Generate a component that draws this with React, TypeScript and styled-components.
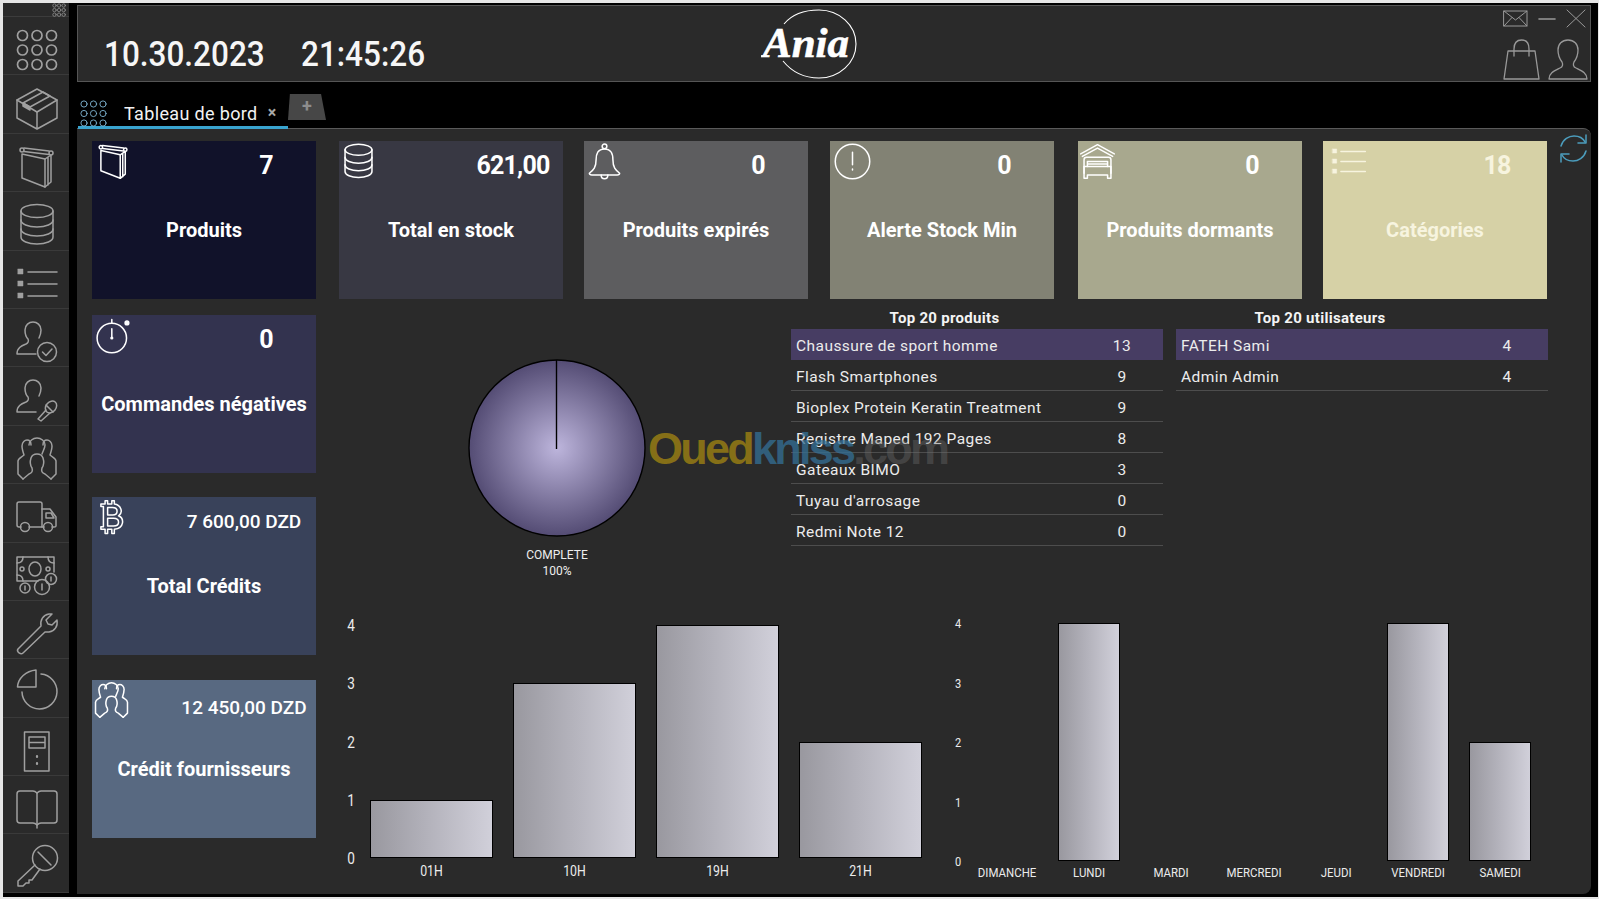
import React from 'react';
import styled, { createGlobalStyle } from 'styled-components';

const UI_FONT = `"Roboto", "Liberation Sans", sans-serif`;

const GlobalStyle = createGlobalStyle`
  html, body { margin: 0; padding: 0; background: #000; }
  body { font-family: ${UI_FONT}; color: #fff; overflow: hidden; }
`;

const Frame = styled.div`
  box-sizing: border-box;
  width: 1599px;
  height: 899px;
  display: flex;
  background: #000;
  border-style: solid;
  border-color: #e6e6e6;
  border-width: 3px 1px 2px 3px;
`;

const Sidebar = styled.nav`
  width: 66px;
  height: 890px;
  flex: none;
  display: flex;
  flex-direction: column;
  background: #2a2a2a;
  color: #a0a0a0;
`;

const SidebarTop = styled.div`
  height: 14px;
  flex: none;
  display: flex;
  justify-content: flex-end;
  padding-right: 3px;
  border-bottom: 1px solid #3c3c3c;
  box-sizing: border-box;
  color: #8f8f8f;
`;

const SidebarItem = styled.div<{ $inset?: number }>`
  flex: 0 0 58.4px;
  box-sizing: border-box;
  padding: ${(p) => p.$inset ?? 11}px 0 0 12px;
  border-bottom: 1px solid #3a3a3a;
`;

const Main = styled.div`
  margin-left: 8px;
  width: 1514px;
  display: flex;
  flex-direction: column;
  padding-top: 2px;
`;

const Header = styled.header`
  height: 77px;
  box-sizing: border-box;
  flex: none;
  display: grid;
  grid-template-columns: 683px 100px 1fr;
  background: #2a2a2a;
  border: 1px solid #555;
`;

const DateTime = styled.div`
  display: flex;
  gap: 18px;
  padding: 28px 0 0 26px;
  font-size: 35px;
  line-height: 42px;
  font-weight: 500;
  color: #f6f6f6;
`;

const ClockPart = styled.span`
  display: block;
  transform: scaleX(0.9);
  transform-origin: left center;
`;

const LogoScript = styled.text`
  font-family: "Liberation Serif", serif;
  font-style: italic;
  font-weight: 700;
  font-size: 43px;
  fill: #fff;
  stroke: #fff;
  stroke-width: 0.6px;
`;

const WindowTools = styled.div`
  display: flex;
  flex-direction: column;
  align-items: flex-end;
  padding: 3px 4px 0 0;
  color: #999;
`;

const ToolRow = styled.div`
  display: flex;
  align-items: center;
  gap: 10px;
`;

const AccountRow = styled.div`
  display: flex;
  align-items: flex-end;
  gap: 8px;
  margin-top: 11px;
  margin-right: -2px;
`;

const TabStrip = styled.div`
  height: 46px;
  flex: none;
  display: flex;
  align-items: flex-end;
`;

const ActiveTab = styled.div`
  position: relative;
  z-index: 2;
  box-sizing: border-box;
  width: 210px;
  height: 29px;
  margin: 0 0 -1px 1px;
  padding: 0 0 0 2px;
  display: flex;
  align-items: flex-start;
  border-bottom: 3px solid #39a4cf;
  color: #7fb6d4;
`;

const TabTitle = styled.span`
  margin: 4px 0 0 17px;
  font-size: 18px;
  line-height: 20px;
  letter-spacing: 0.35px;
  color: #f2f2f2;
`;

const TabClose = styled.span`
  margin: 3px 0 0 10px;
  font-size: 16px;
  line-height: 20px;
  font-weight: 700;
  color: #a8a8a8;
`;

const AddTab = styled.div`
  width: 38px;
  height: 26px;
  margin: 0 0 8px 0;
  display: flex;
  align-items: center;
  justify-content: center;
  padding-bottom: 3px;
  box-sizing: border-box;
  background: #474747;
  clip-path: polygon(5% 0, 87% 0, 100% 100%, 0 100%);
  font-size: 18px;
  font-weight: 700;
  color: #8d8d8d;
`;

const Content = styled.main`
  position: relative;
  height: 766px;
  box-sizing: border-box;
  padding: 12px 0 0 15px;
  background: #2a2a2a;
  border-top: 1px solid #5a5a5a;
  border-radius: 0 8px 8px 0;
`;

const RefreshSlot = styled.div`
  position: absolute;
  top: 5px;
  right: 3px;
  color: #4c9dbd;
`;

const CardRow = styled.div`
  display: flex;
`;

const Card = styled.section<{ $bg: string; $ink?: string; $shift?: number; $gapAbove?: number }>`
  box-sizing: border-box;
  flex: none;
  width: 224px;
  height: 158px;
  margin-left: ${(p) => p.$shift ?? 0}px;
  margin-top: ${(p) => p.$gapAbove ?? 0}px;
  background: ${(p) => p.$bg};
  color: ${(p) => p.$ink ?? '#fff'};
`;

const CardTop = styled.div`
  height: 48px;
  display: flex;
  align-items: center;
  justify-content: space-between;
`;

const CardGlyph = styled.div<{ $x: number }>`
  margin-left: ${(p) => p.$x}px;
  margin-top: -8px;
  display: flex;
`;

const CardValue = styled.div<{ $wide?: boolean; $drop?: number }>`
  width: ${(p) => (p.$wide ? 144 : 100)}px;
  margin-top: ${(p) => p.$drop ?? 0}px;
  text-align: center;
  white-space: nowrap;
  font-weight: ${(p) => (p.$wide ? 500 : 700)};
  font-size: ${(p) => (p.$wide ? 19 : 25)}px;
  letter-spacing: ${(p) => (p.$wide ? 0 : -0.8)}px;
`;

const CardLabel = styled.div`
  margin-top: 29px;
  text-align: center;
  white-space: nowrap;
  font-size: 20px;
  line-height: 24px;
  font-weight: 700;
  letter-spacing: 0;
`;

const Lower = styled.div`
  display: flex;
`;

const LeftCards = styled.div`
  width: 224px;
  flex: none;
  padding-top: 16px;
`;

const Analysis = styled.div`
  margin-left: 23px;
  padding-top: 10px;
`;

const Middle = styled.div`
  height: 314px;
  display: flex;
  gap: 13px;
`;

const PieBlock = styled.div`
  width: 452px;
  margin-right: -13px;
  box-sizing: border-box;
  padding: 50px 0 0 129px;
  display: flex;
  flex-direction: column;
`;

const PieSvg = styled.svg`
  width: 178px;
  height: 178px;
  flex: none;
`;

const PieCaption = styled.div`
  width: 178px;
  margin-top: 10px;
  text-align: center;
  font-size: 12px;
  line-height: 16px;
  color: #eee;
`;

const TopTable = styled.div`
  width: 372px;
  flex: none;
`;

const TableTitle = styled.div<{ $inset: number }>`
  height: 20px;
  padding-right: ${(p) => p.$inset}px;
  font-size: 15px;
  line-height: 18px;
  font-weight: 700;
  letter-spacing: 0.3px;
  color: #f4f4f4;
  text-align: center;
`;

const TableRow = styled.div<{ $on?: boolean }>`
  box-sizing: border-box;
  height: 31px;
  display: flex;
  align-items: center;
  padding: 3px 0 0 5px;
  background: ${(p) => (p.$on ? '#473d63' : 'transparent')};
  border-bottom: 1px solid ${(p) => (p.$on ? '#473d63' : '#4d4d4d')};
  font-size: 15.5px;
  letter-spacing: 0.45px;
  color: #ececec;
`;

const RowName = styled.span`
  flex: 1;
  white-space: nowrap;
`;

const RowCount = styled.span`
  width: 70px;
  margin-right: 6px;
  text-align: center;
`;

const Charts = styled.div`
  display: flex;
  align-items: flex-start;
`;

const Chart = styled.div<{ $top: number; $left: number }>`
  display: flex;
  margin-top: ${(p) => p.$top}px;
  margin-left: ${(p) => p.$left}px;
`;

const Axis = styled.div<{ $height: number; $width: number; $pull: number; $size: number }>`
  width: ${(p) => p.$width}px;
  height: ${(p) => p.$height}px;
  margin-right: ${(p) => p.$pull}px;
  display: flex;
  flex-direction: column-reverse;
  justify-content: space-between;
  text-align: center;
  font-size: ${(p) => p.$size}px;
  color: #ececec;
`;

const AxisTick = styled.span`
  display: block;
  height: 0;
  line-height: 0;
  transform: translateY(1px) scaleX(0.85);
`;

const Plot = styled.div`
  display: flex;
  flex-direction: column;
`;

const Slots = styled.div<{ $height: number }>`
  height: ${(p) => p.$height}px;
  display: flex;
  align-items: flex-end;
`;

const Slot = styled.div<{ $width: number }>`
  width: ${(p) => p.$width}px;
  box-sizing: border-box;
  padding: 0 10px;
`;

const Bar = styled.div`
  box-sizing: border-box;
  border: 1px solid #000;
  background: linear-gradient(90deg, #99989f 0%, #b2b1ba 45%, #d1d0da 100%);
`;

const SlotLabels = styled.div`
  display: flex;
`;

const SlotLabel = styled.div<{ $width: number; $size: number; $gap: number; $squeeze: number }>`
  width: ${(p) => p.$width}px;
  margin-top: ${(p) => p.$gap}px;
  text-align: center;
  white-space: nowrap;
  font-size: ${(p) => p.$size}px;
  line-height: 16px;
  color: #ececec;
  transform: scaleX(${(p) => p.$squeeze});
`;

const Watermark = styled.div`
  position: absolute;
  left: 571px;
  top: 295px;
  z-index: 3;
  font-family: "Liberation Sans", sans-serif;
  font-size: 45px;
  line-height: 50px;
  font-weight: 700;
  letter-spacing: -2.75px;
  white-space: nowrap;
  pointer-events: none;
`;

const WatermarkPart = styled.span<{ $ink: string }>`
  color: ${(p) => p.$ink};
`;

const Glyph = styled.svg`
  display: block;
  flex: none;
  overflow: visible;
  fill: none;
  stroke: currentColor;
  stroke-linecap: round;
  stroke-linejoin: round;
`;

const PERSON = 'M21 34H2c0-6 4-8 9-10 2-1 3-3 2-5-2-2-3-6-3-9 0-5 4-8 8-8s8 3 8 8c0 3-1 6-2 8';

// Line drawings shared by the sidebar, the cards and the window tools.
const DRAWINGS: Record<string, React.ReactNode> = {
  box: (
    <>
      <path d="M22 2 42 13 22 25 2 13Z" />
      <path d="M2 13V31L22 42 42 31V13M22 25V42" />
      <path d="M8 16 28 5 35 9 15 20Z" />
      <path d="M8 16 15 20V23L8 19Z" fill="currentColor" />
    </>
  ),
  book: (
    <>
      <path d="M7 9 30 14V42L7 33Z" />
      <path d="M30 14 36 10V37L30 42M33 12V40" />
      <path d="M9 3 34 6M9 6.5 34 9.5" />
      <circle cx="7" cy="5" r="2" />
      <circle cx="36" cy="8" r="2" />
    </>
  ),
  db: (
    <>
      <ellipse cx="22" cy="8" rx="16" ry="6.5" />
      <path d="M6 8V34C6 38 13 41 22 41S38 38 38 34V8" />
      <path d="M6 17C6 21 13 24 22 24S38 21 38 17" />
      <path d="M6 26C6 30 13 33 22 33S38 30 38 26" />
    </>
  ),
  list: (
    <>
      <path d="M3 7H8V12H3ZM3 19H8V24H3ZM3 31H8V36H3Z" fill="currentColor" strokeWidth={0.5} />
      <path d="M13 10H42M13 22H42M13 34H42" />
    </>
  ),
  userCheck: (
    <>
      <path d={PERSON} />
      <circle cx="32" cy="32" r="9.5" />
      <path d="M27.5 32 31 35.5 37 29" />
    </>
  ),
  userMic: (
    <>
      <path d={PERSON} />
      <ellipse cx="36" cy="29" rx="5" ry="6.5" transform="rotate(40 36 29)" />
      <path d="M31 27 38 34M31 32 23 41 26 43 35 35" />
    </>
  ),
  group: (
    <>
      <path d="M8 42 14 37C17 36 18 34 17 31 15 28 15 24 16 21 17 18 20 17 22 17S27 18 28 21 29 28 27 31C26 34 27 36 30 37L36 42" />
      <path d="M8 42 3 37V24C3 21 7 20 9 18 8 15 7 12 7 9 7 5 10 3 12 3 15 3 16 5 16 8" />
      <path d="M14 8C14 4 18 1 22 1S30 4 30 8C30 11 28 14 27 17" />
      <path d="M36 42 41 37V24C41 21 37 20 35 18 36 15 37 12 37 9 37 5 34 3 32 3 29 3 28 5 28 8" />
    </>
  ),
  truck: (
    <>
      <path d="M6 32H4C3 32 2 31 2 30V9C2 8 3 7 4 7H25C26 7 27 8 27 9V32H14" />
      <path d="M27 14H35L41 22V31C41 32 40 32 39 32H37M29 32H27M31 18H36L39 23H31Z" />
      <circle cx="10" cy="32" r="4.5" />
      <circle cx="33" cy="32" r="4.5" />
    </>
  ),
  money: (
    <>
      <path d="M23 28H2V4H39V19" />
      <path d="M2 10C6 10 8 8 8 4M33 4C33 8 35 10 39 10M2 22C6 22 8 24 8 28" />
      <ellipse cx="20" cy="16" rx="6" ry="7" />
      <circle cx="7" cy="16" r="2" />
      <circle cx="33" cy="16" r="2" />
      <circle cx="10" cy="35" r="5" />
      <path d="M10 33V37" />
      <circle cx="27" cy="34" r="7.5" />
      <path d="M27 31V37" />
      <circle cx="36" cy="26" r="5.5" />
      <path d="M36 24V28" />
    </>
  ),
  wrench: (
    <path d="M3 38 26 15C25 9 28 4 34 3H37L31 9 33 13 37 14 42 9C43 15 40 20 34 21 32 21 31 21 30 21L8 42C6 44 1 41 3 38Z" />
  ),
  pie: (
    <>
      <path d="M21 3V20H2.5C3 11 11 4 21 3Z" />
      <path d="M26 7A17.5 17.5 0 1 1 7 25" />
    </>
  ),
  server: (
    <>
      <path d="M9.5 3H34V42H9.5Z" />
      <path d="M14 8H30V19H14ZM14 13.5H30" />
      <path d="M22 27V28M22 34V35" strokeWidth={2.2} />
    </>
  ),
  openBook: (
    <>
      <path d="M22 7C21 6 20 5 18 5H5C3 5 2 6 2 8V34C2 36 3 37 5 37H18C20 37 21 38 22 39 23 38 24 37 26 37H39C41 37 42 36 42 34V8C42 6 41 5 39 5H26C24 5 23 6 22 7Z" />
      <path d="M22 7V42" />
    </>
  ),
  key: (
    <>
      <circle cx="30" cy="15" r="12.5" />
      <path d="M23 9 36 22" />
      <path d="M20 22 3 38V43H8L11 40H14V37H17L25 26" />
    </>
  ),
  bell: (
    <>
      <path d="M22 7C14 7 12 13 12 20 12 29 9 32 4 36 4 37 5 38 7 38H37C39 38 40 37 40 36 35 32 32 29 32 20 32 13 30 7 22 7Z" />
      <circle cx="22" cy="4" r="2.8" />
      <path d="M18 38C18 44 26 44 26 38" />
    </>
  ),
  alert: (
    <>
      <circle cx="22" cy="22" r="20.5" />
      <path d="M22 11V26M22 31V32" strokeWidth={1.8} />
    </>
  ),
  bedHouse: (
    <>
      <path d="M2 13 22 2 42 13M4 16 22 6 40 16" />
      <path d="M6 36V20C6 18 7 17 9 17H35C37 17 38 18 38 20V36" />
      <path d="M6 28H38V36M6 28V42H10V38H34V42H38V36" />
      <path d="M10 28V22H34V28M10 25H34" />
    </>
  ),
  timer: (
    <>
      <circle cx="20" cy="25" r="17.5" />
      <path d="M20 3V7M20 14V25" />
      <circle cx="20" cy="25" r="1" fill="currentColor" />
      <circle cx="38" cy="7" r="2.2" fill="currentColor" />
    </>
  ),
  bitcoin: (
    <>
      <path d="M7 6H12V2H15V6H20V2H23V6C31 7 34 16 28 20 35 23 35 35 23 36V41H20V36H15V41H12V36H7V33H10V9H7Z" />
      <path d="M15 10H21C28 10 28 19 21 19H15ZM15 23H22C30 23 30 32 22 32H15Z" />
    </>
  ),
  mail: (
    <>
      <path d="M1 2H24V17H1Z" />
      <path d="M1 2 12.5 11 24 2M1 17 9 8.5M24 17 16 8.5" />
    </>
  ),
  minus: <path d="M1 1H17" strokeWidth={1.6} />,
  close: <path d="M1 1 19 18M19 1 1 18" />,
  bag: (
    <>
      <path d="M5 12H32L36 40H1Z" />
      <path d="M11 17V10C11 4 14 1 18.5 1S26 4 26 10V17" />
    </>
  ),
  person: (
    <path d="M1 40C1 34 6 32 12 29 15 28 15 25 14 23 11 19 10 15 10 11 10 5 14 1 20 1S30 5 30 11C30 15 29 19 26 23 25 25 25 28 28 29 34 32 39 34 39 40Z" />
  ),
  refresh: (
    <>
      <path d="M2 12C4 5 10 2 15 2 20 2 24 4 26 8" />
      <path d="M27 1V9H19" />
      <path d="M27 17C25 24 19 27 14 27 9 27 5 25 3 21" />
      <path d="M2 28V20H10" />
    </>
  ),
};

type IconProps = { name: string; box: [number, number]; size?: [number, number]; weight?: number };

const Icon = ({ name, box, size, weight = 1.5 }: IconProps) => (
  <Glyph
    viewBox={`0 0 ${box[0]} ${box[1]}`}
    width={(size ?? box)[0]}
    height={(size ?? box)[1]}
    strokeWidth={weight}
  >
    {DRAWINGS[name]}
  </Glyph>
);

const DotGrid = ({ pitch, radius, weight }: { pitch: number; radius: number; weight: number }) => {
  const edge = pitch * 2 + (radius + weight) * 2;
  const start = radius + weight;
  return (
    <Glyph viewBox={`0 0 ${edge} ${edge}`} width={edge} height={edge} strokeWidth={weight}>
      {[0, 1, 2].flatMap((row) =>
        [0, 1, 2].map((col) => (
          <circle key={`${row}-${col}`} cx={start + col * pitch} cy={start + row * pitch} r={radius} />
        )),
      )}
    </Glyph>
  );
};

const NAV_ICONS: [string, number][] = [
  ['box', 12], ['book', 11], ['db', 11], ['list', 11], ['userCheck', 11], ['userMic', 11],
  ['group', 11], ['truck', 11], ['money', 10], ['wrench', 10], ['pie', 8], ['server', 11],
  ['openBook', 10], ['key', 9],
];

const TOP_CARDS = [
  { title: 'Produits', value: '7', bg: '#11122a', icon: 'book', x: 3, shift: 0 },
  { title: 'Total en stock', value: '621,00', bg: '#383843', icon: 'db', x: 1, shift: 23 },
  { title: 'Produits expirés', value: '0', bg: '#5d5d5f', icon: 'bell', x: 2, shift: 21 },
  { title: 'Alerte Stock Min', value: '0', bg: '#828274', icon: 'alert', x: 4, shift: 22 },
  { title: 'Produits dormants', value: '0', bg: '#a8a88e', icon: 'bedHouse', x: 1, shift: 24 },
  { title: 'Catégories', value: '18', bg: '#d6d1a6', icon: 'list', x: 7, shift: 21, ink: '#f7f4df' },
];

const SIDE_CARDS = [
  { title: 'Commandes négatives', value: '0', bg: '#33334f', icon: 'timer', gap: 0, x: 3, wide: false, drop: 0 },
  { title: 'Total Crédits', value: '7 600,00 DZD', bg: '#39425a', icon: 'bitcoin', gap: 24, x: 3, wide: true, drop: 0 },
  { title: 'Crédit fournisseurs', value: '12 450,00 DZD', bg: '#586981', icon: 'group', gap: 25, x: 1, wide: true, drop: 6 },
];

const BEST_PRODUCTS: [string, number][] = [
  ['Chaussure de sport homme', 13],
  ['Flash Smartphones', 9],
  ['Bioplex Protein Keratin Treatment', 9],
  ['Registre Maped 192 Pages', 8],
  ['Gateaux BIMO', 3],
  ["Tuyau d'arrosage", 0],
  ['Redmi Note 12', 0],
];

const BEST_USERS: [string, number][] = [
  ['FATEH Sami', 4],
  ['Admin Admin', 4],
];

const BY_HOUR: [string, number][] = [['01H', 1], ['10H', 3], ['19H', 4], ['21H', 2]];

const BY_DAY: [string, number][] = [
  ['DIMANCHE', 0], ['LUNDI', 4], ['MARDI', 0], ['MERCREDI', 0],
  ['JEUDI', 0], ['VENDREDI', 4], ['SAMEDI', 2],
];

type BarChartProps = {
  data: [string, number][];
  unit: number;
  slot: number;
  axisSize: number;
  axisWidth: number;
  axisPull: number;
  labelSize: number;
  labelGap: number;
  squeeze: number;
  top: number;
  left: number;
};

const BarChart = ({
  data, unit, slot, axisSize, axisWidth, axisPull, labelSize, labelGap, squeeze, top, left,
}: BarChartProps) => (
  <Chart $top={top} $left={left}>
    <Axis $height={unit * 4} $width={axisWidth} $pull={axisPull} $size={axisSize}>
      {[0, 1, 2, 3, 4].map((tick) => (
        <AxisTick key={tick}>{tick}</AxisTick>
      ))}
    </Axis>
    <Plot>
      <Slots $height={unit * 4}>
        {data.map(([label, amount]) => (
          <Slot key={label} $width={slot}>
            {amount > 0 && <Bar style={{ height: amount * unit }} />}
          </Slot>
        ))}
      </Slots>
      <SlotLabels>
        {data.map(([label]) => (
          <SlotLabel key={label} $width={slot} $size={labelSize} $gap={labelGap} $squeeze={squeeze}>
            {label}
          </SlotLabel>
        ))}
      </SlotLabels>
    </Plot>
  </Chart>
);

const RankTable = ({ title, rows, inset }: { title: string; rows: [string, number][]; inset: number }) => (
  <TopTable>
    <TableTitle $inset={inset}>{title}</TableTitle>
    {rows.map(([name, count], index) => (
      <TableRow key={name} $on={index === 0}>
        <RowName>{name}</RowName>
        <RowCount>{count}</RowCount>
      </TableRow>
    ))}
  </TopTable>
);

export default function App() {
  return (
    <>
      <GlobalStyle />
      <Frame>
        <Sidebar>
          <SidebarTop>
            <DotGrid pitch={4.6} radius={1.7} weight={0.8} />
          </SidebarTop>
          <SidebarItem>
            <Glyph viewBox="0 0 44 44" width={44} height={44} strokeWidth={1.7}>
              {[7.5, 22, 36.5].flatMap((cy) =>
                [7.5, 22, 36.5].map((cx) => <circle key={`${cx}-${cy}`} cx={cx} cy={cy} r={5} />),
              )}
            </Glyph>
          </SidebarItem>
          {NAV_ICONS.map(([name, inset]) => (
            <SidebarItem key={name} $inset={inset}>
              <Icon name={name} box={[44, 44]} />
            </SidebarItem>
          ))}
        </Sidebar>

        <Main>
          <Header>
            <DateTime>
              <ClockPart>10.30.2023</ClockPart>
              <ClockPart>21:45:26</ClockPart>
            </DateTime>
            <svg viewBox="760 5 100 76" width={100} height={76}>
              <path
                d="M783 23C792 12 805 9 818 9 838 9 855 24 855 43S838 77 818 77C803 77 791 71 782 60"
                fill="none"
                stroke="#fff"
                strokeWidth={1.1}
              />
              <LogoScript x={762} y={56}>
                Ania
              </LogoScript>
            </svg>
            <WindowTools>
              <ToolRow>
                <Icon name="mail" box={[25, 19]} weight={1} />
                <Icon name="minus" box={[18, 2]} />
                <Icon name="close" box={[20, 19]} weight={1} />
              </ToolRow>
              <AccountRow>
                <Icon name="bag" box={[37, 41]} weight={1.3} />
                <Icon name="person" box={[40, 41]} weight={1.3} />
              </AccountRow>
            </WindowTools>
          </Header>

          <TabStrip>
            <ActiveTab>
              <DotGrid pitch={9.5} radius={3.1} weight={0.9} />
              <TabTitle>Tableau de bord</TabTitle>
              <TabClose>×</TabClose>
            </ActiveTab>
            <AddTab>+</AddTab>
          </TabStrip>

          <Content>
            <RefreshSlot>
              <Icon name="refresh" box={[29, 29]} weight={1.5} />
            </RefreshSlot>

            <CardRow>
              {TOP_CARDS.map((card) => (
                <Card key={card.title} $bg={card.bg} $ink={card.ink} $shift={card.shift}>
                  <CardTop>
                    <CardGlyph $x={card.x}>
                      <Icon name={card.icon} box={[44, 44]} size={[37, 37]} weight={1.8} />
                    </CardGlyph>
                    <CardValue>{card.value}</CardValue>
                  </CardTop>
                  <CardLabel>{card.title}</CardLabel>
                </Card>
              ))}
            </CardRow>

            <Lower>
              <LeftCards>
                {SIDE_CARDS.map((card) => (
                  <Card key={card.title} $bg={card.bg} $gapAbove={card.gap}>
                    <CardTop>
                      <CardGlyph $x={card.x}>
                        <Icon name={card.icon} box={[44, 44]} size={[37, 37]} weight={1.8} />
                      </CardGlyph>
                      <CardValue $wide={card.wide} $drop={card.drop}>{card.value}</CardValue>
                    </CardTop>
                    <CardLabel>{card.title}</CardLabel>
                  </Card>
                ))}
              </LeftCards>

              <Analysis>
                <Middle>
                  <PieBlock>
                    <PieSvg viewBox="0 0 178 178">
                      <defs>
                        <radialGradient id="pieFill">
                          <stop offset="0%" stopColor="#bdb5dc" />
                          <stop offset="100%" stopColor="#544c74" />
                        </radialGradient>
                      </defs>
                      <circle cx="89" cy="89" r="88" fill="url(#pieFill)" stroke="#000" strokeWidth={1.4} />
                      <path d="M88.5 1V90" stroke="#000" strokeWidth={1.4} />
                    </PieSvg>
                    <PieCaption>
                      COMPLETE
                      <br />
                      100%
                    </PieCaption>
                  </PieBlock>
                  <RankTable title="Top 20 produits" rows={BEST_PRODUCTS} inset={65} />
                  <RankTable title="Top 20 utilisateurs" rows={BEST_USERS} inset={84} />
                </Middle>

                <Charts>
                  <BarChart
                    data={BY_HOUR}
                    unit={58.25}
                    slot={143}
                    axisSize={16}
                    axisWidth={24}
                    axisPull={-3}
                    labelSize={15}
                    labelGap={5}
                    squeeze={0.82}
                    top={2}
                    left={0}
                  />
                  <BarChart
                    data={BY_DAY}
                    unit={59.5}
                    slot={82.2}
                    axisSize={13}
                    axisWidth={16}
                    axisPull={0}
                    labelSize={13}
                    labelGap={4}
                    squeeze={0.88}
                    top={0}
                    left={18}
                  />
                </Charts>
              </Analysis>
            </Lower>

            <Watermark>
              <WatermarkPart $ink="rgba(150, 124, 20, 0.85)">Oued</WatermarkPart>
              <WatermarkPart $ink="rgba(52, 112, 150, 0.75)">kniss</WatermarkPart>
              <WatermarkPart $ink="rgba(110, 110, 110, 0.4)">.com</WatermarkPart>
            </Watermark>
          </Content>
        </Main>
      </Frame>
    </>
  );
}
